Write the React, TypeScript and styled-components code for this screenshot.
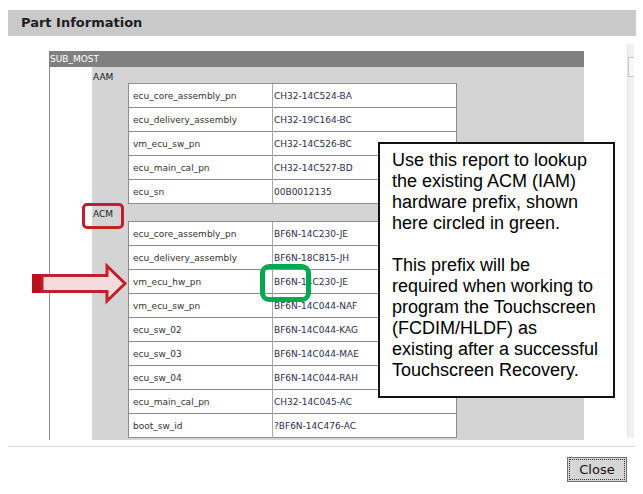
import React from 'react';
import styled, {createGlobalStyle} from 'styled-components';

const GlobalStyle = createGlobalStyle`
    html, body {
        margin:0;
        padding:0;
        background:#fff;
    }
`

const Page = styled.div`
    position:relative;
    width:643px;
    height:494px;
    overflow:hidden;
    background:#fff;
    font-family:"DejaVu Sans", Verdana, sans-serif;
`

const TopGap = styled.div`
    height:10px;
`

const Dialog = styled.div`
    margin:0 7px 0 8px;
`

const TitleBar = styled.div`
    height:26px;
    line-height:26px;
    background:#c9c9c9;
    padding-left:13px;
    font-size:13px;
    font-weight:bold;
    color:#1e1e1e;
`

const BodyRow = styled.div`
    display:flex;
    height:404px;
`

const ScrollView = styled.div`
    flex:1;
    overflow:hidden;
    padding:15px 0 0 41px;
`

const Scrollbar = styled.div`
    width:6px;
    margin:8px 2px 2px 0;
    background:#f0f0f0;
    border-left:1px solid #e4e4e4;
    .thumb {
        margin-top:13px;
        height:18px;
        border:1px solid #c8c8c8;
        border-right:none;
        background:#f8f8f8;
    }
`

const OuterTable = styled.div`
    width:535px;
`

const GroupHeader = styled.div`
    height:16px;
    line-height:17px;
    background:#808080;
    color:#fff;
    font-size:9px;
    padding-left:1px;
`

const GroupRow = styled.div`
    display:flex;
`

const BlankCell = styled.div`
    width:42px;
    border-left:1px solid #8a8a8a;
    background:#fff;
`

const GrayPanel = styled.div`
    flex:1;
    background:#d4d4d4;
    padding-bottom:20px;
`

const SectionLabel = styled.div<{h:number}>`
    height:${({h}) => h}px;
    line-height:${({h}) => h + 4}px;
    padding-left:1px;
    font-size:9px;
    color:#1a1a1a;
`

const SectionBody = styled.div`
    padding-left:36px;
`

const DataTable = styled.div`
    width:327px;
    background:#fff;
    border:1px solid #8c8c8c;
    border-top:none;
`

const DataRow = styled.div`
    display:grid;
    grid-template-columns:144px 1fr;
    height:23px;
    border-top:1px solid #8c8c8c;
`

const KeyCell = styled.div`
    padding-left:4px;
    line-height:24px;
    font-size:9px;
    color:#333;
    border-right:1px solid #a8a8a8;
`

const ValueCell = styled.div`
    padding-left:1px;
    line-height:24px;
    font-size:9px;
    color:#2e2e50;
`

const Footer = styled.div`
    margin-top:6px;
    border-top:1px solid #d9d9d9;
    display:flex;
    justify-content:flex-end;
    padding:10px 9px 0 0;
`

const CloseButton = styled.button`
    width:60px;
    height:25px;
    padding:0;
    background:#d6d6d6;
    border:1px solid #707070;
    outline:1px dotted #333;
    outline-offset:-3px;
    font-family:"DejaVu Sans", Verdana, sans-serif;
    font-size:13px;
    color:#111;
`

const Callout = styled.div`
    position:absolute;
    left:378px;
    top:142px;
    width:237px;
    height:256px;
    box-sizing:border-box;
    background:#fff;
    border:2px solid #111;
    padding:6px 0 0 12px;
    font-family:"Liberation Sans", Arial, sans-serif;
    font-size:18px;
    line-height:21px;
    color:#000;
    white-space:nowrap;
`

const RingMark = styled.div<{color:string; w:number; h:number; x:number; y:number; stroke:number; radius:number}>`
    position:absolute;
    box-sizing:border-box;
    left:${({x}) => x}px;
    top:${({y}) => y}px;
    width:${({w}) => w}px;
    height:${({h}) => h}px;
    border:${({stroke, color}) => `${stroke}px solid ${color}`};
    border-radius:${({radius}) => radius}px;
`

const ArrowMark = styled.svg`
    position:absolute;
    left:30px;
    top:260px;
`

type Row = [string, string];

const aamRows: Row[] = [
    ['ecu_core_assembly_pn', 'CH32-14C524-BA'],
    ['ecu_delivery_assembly', 'CH32-19C164-BC'],
    ['vm_ecu_sw_pn', 'CH32-14C526-BC'],
    ['ecu_main_cal_pn', 'CH32-14C527-BD'],
    ['ecu_sn', '00B0012135'],
];

const acmRows: Row[] = [
    ['ecu_core_assembly_pn', 'BF6N-14C230-JE'],
    ['ecu_delivery_assembly', 'BF6N-18C815-JH'],
    ['vm_ecu_hw_pn', 'BF6N-14C230-JE'],
    ['vm_ecu_sw_pn', 'BF6N-14C044-NAF'],
    ['ecu_sw_02', 'BF6N-14C044-KAG'],
    ['ecu_sw_03', 'BF6N-14C044-MAE'],
    ['ecu_sw_04', 'BF6N-14C044-RAH'],
    ['ecu_main_cal_pn', 'CH32-14C045-AC'],
    ['boot_sw_id', '?BF6N-14C476-AC'],
];

const Section = ({label, h, rows}:{label:string; h:number; rows:Row[]}) => (
    <>
        <SectionLabel h={h}>{label}</SectionLabel>
        <SectionBody>
            <DataTable>
                {rows.map(([k, v], i) => (
                    <DataRow key={i}>
                        <KeyCell>{k}</KeyCell>
                        <ValueCell>{v}</ValueCell>
                    </DataRow>
                ))}
            </DataTable>
        </SectionBody>
    </>
)

const App = () => {
    return (
        <Page>
            <GlobalStyle/>
            <TopGap/>
            <Dialog>
                <TitleBar>Part Information</TitleBar>
                <BodyRow>
                    <ScrollView>
                        <OuterTable>
                            <GroupHeader>SUB_MOST</GroupHeader>
                            <GroupRow>
                                <BlankCell/>
                                <GrayPanel>
                                    <Section label="AAM" h={16} rows={aamRows}/>
                                    <Section label="ACM" h={17} rows={acmRows}/>
                                </GrayPanel>
                            </GroupRow>
                        </OuterTable>
                    </ScrollView>
                    <Scrollbar><div className="thumb"/></Scrollbar>
                </BodyRow>
                <Footer>
                    <CloseButton>Close</CloseButton>
                </Footer>
            </Dialog>

            <RingMark color="#c0202a" x={82} y={203} w={42} h={26} stroke={3} radius={5}/>
            <RingMark color="#00a84f" x={260} y={264} w={51} h={38} stroke={5} radius={9}/>
            <ArrowMark width="100" height="46" viewBox="0 0 100 46">
                <rect x="2" y="14" width="11" height="19" fill="#b5121b"/>
                <polygon
                    points="12,15.5 77,15.5 77,6 95,23.5 77,41 77,31.5 12,31.5"
                    fill="#f4dcdc"
                    stroke="#c0202a"
                    strokeWidth="3"
                    strokeLinejoin="miter"
                />
            </ArrowMark>

            <Callout>
                Use this report to lookup<br/>
                the existing ACM (IAM)<br/>
                hardware prefix, shown<br/>
                here circled in green.<br/>
                <br/>
                This prefix will be<br/>
                required when working to<br/>
                program the Touchscreen<br/>
                (FCDIM/HLDF) as<br/>
                existing after a successful<br/>
                Touchscreen Recovery.
            </Callout>
        </Page>
    )
}

export default App;
